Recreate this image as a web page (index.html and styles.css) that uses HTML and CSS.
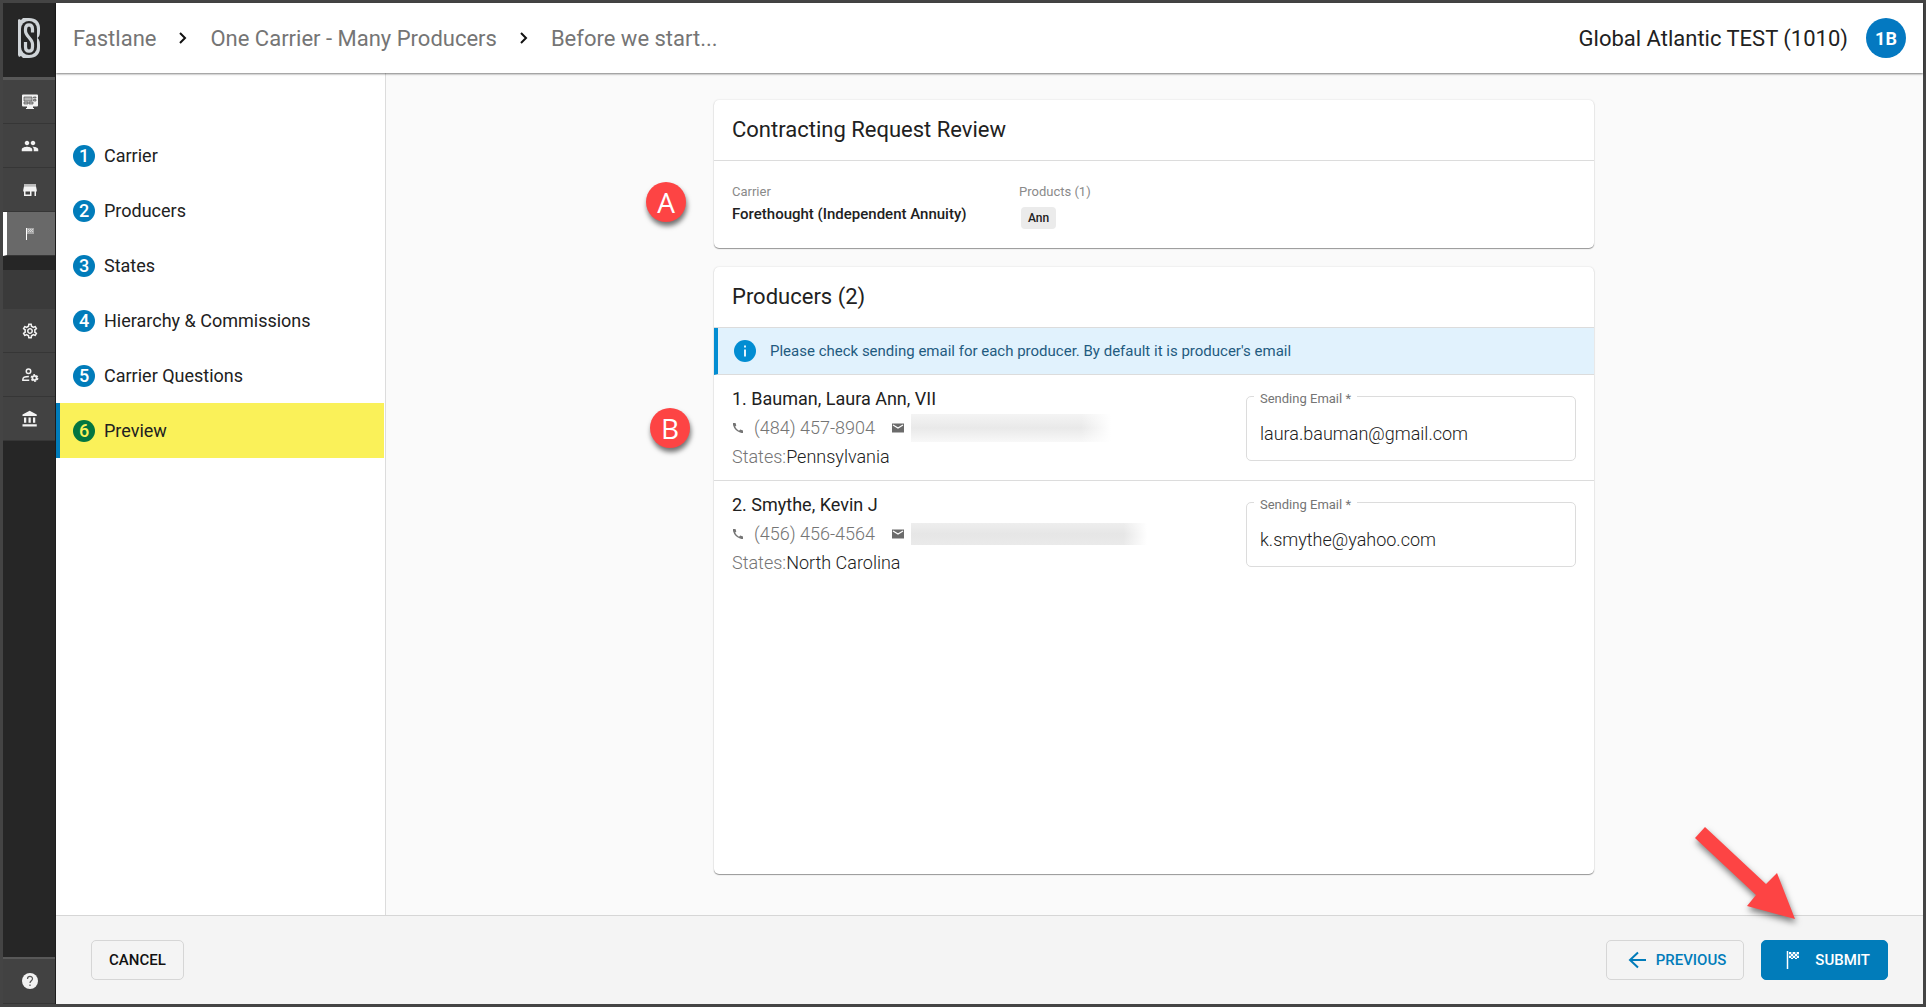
FILE: index.html
```html
<!DOCTYPE html>
<html lang="en">
<head>
<meta charset="utf-8">
<meta name="viewport" content="width=device-width, initial-scale=1">
<title>Contracting Request Review</title>
<link rel="stylesheet" href="styles.css">
</head>
<body>
<div class="app">
  <nav class="rail" aria-label="Main">
    <a class="rail-logo" href="#" aria-label="Home">
      <svg width="24" height="42" viewBox="0 0 24 42" fill="none">
        <path d="M1 3L2 2 4 3 6 1H12C19 1 23 5 23 11V14C23 18 22 20 20.500 21 22 22 23 24 23 28V31C23 37 19 41 12 41H6L4 39 2 40 1 38Z" fill="#cfd4d8"/>
        <rect x="4" y="4" width="16" height="34" rx="8" fill="#262626"/>
        <path d="M15.500 15.500V12C15.500 9 14.300 7.800 12 7.800S8.500 9 8.500 12V14C8.500 19 15.500 22 15.500 27V30C15.500 33 14.300 34.200 12 34.200S8.500 33 8.500 30V25" stroke="#cfd4d8" stroke-width="3.200"/>
      </svg>
    </a>
    <a class="rail-item" href="#" aria-label="Dashboard">
      <svg width="18" height="18" viewBox="0 0 18 18"><path d="M2 1.500h14q1 0 1 1v10q0 1-1 1h-4v1.500h1v1H5v-1h1v-1.500H2q-1 0-1-1v-10q0-1 1-1z" fill="#f2f2f2"/><path d="M3 4h8v4H3zM12.500 4H15v1h-2.500zM12.500 6.500H15v1.500h-2.500zM3 9h4v2H3zM8 9h4v2H8z" fill="#b5b5b5" stroke="#555" stroke-width=".7"/></svg>
    </a>
    <a class="rail-item" href="#" aria-label="Producers">
      <svg width="18" height="18" viewBox="0 0 24 24" fill="#f2f2f2"><path d="M16 11c1.660 0 2.990-1.340 2.990-3S17.660 5 16 5s-3 1.340-3 3 1.340 3 3 3zm-8 0c1.660 0 2.990-1.340 2.990-3S9.660 5 8 5 5 6.340 5 8s1.340 3 3 3zm0 2c-2.330 0-7 1.170-7 3.500V19h14v-2.500c0-2.330-4.670-3.500-7-3.500zm8 0c-.29 0-.62.020-.97.050 1.160.84 1.970 1.970 1.970 3.450V19h6v-2.500c0-2.330-4.670-3.500-7-3.500z"/></svg>
    </a>
    <a class="rail-item" href="#" aria-label="Carriers">
      <svg width="18" height="18" viewBox="0 0 24 24"><path d="M4 4h16v3H4z" fill="#bbb"/><path d="M21 14v-2l-1-5H4l-1 5v2h1v6h10v-6h4v6h2v-6h1zm-9 4H6v-4h6v4z" fill="#f2f2f2"/></svg>
    </a>
    <a class="rail-item rail-item--active" href="#" aria-label="Fastlane" aria-current="page">
      <svg width="18" height="18" viewBox="0 0 18 18"><path d="M5.500 3v12" stroke="#fff"/><path d="M6 3h7v6H6z" fill="#a5a5a5"/><path d="M7 4h1v1H7zM9 4h1v1H9zM11 4h1v1h-1zM8 5h1v1H8zM10 5h1v1h-1zM7 6h1v1H7zM9 6h1v1H9zM11 6h1v1h-1z" fill="#d5d5d5"/></svg>
    </a>
    <div class="rail-gap"></div>
    <div class="rail-blank"></div>
    <a class="rail-item" href="#" aria-label="Settings">
      <svg width="18" height="18" viewBox="0 0 24 24" fill="#f2f2f2"><path d="M19.430 12.980c.04-.32.070-.64.070-.98 0-.34-.03-.66-.07-.98l2.110-1.650c.19-.15.240-.42.120-.64l-2-3.460c-.09-.16-.26-.25-.44-.25-.06 0-.12.010-.17.030l-2.490 1c-.52-.4-1.080-.73-1.690-.98l-.38-2.650C14.460 2.180 14.250 2 14 2h-4c-.25 0-.46.180-.49.420l-.38 2.650c-.61.250-1.170.59-1.690.98l-2.490-1c-.06-.02-.12-.03-.18-.03-.17 0-.34.090-.43.250l-2 3.460c-.13.220-.07.490.12.640l2.110 1.650c-.04.320-.07.650-.07.980 0 .33.030.66.070.98l-2.110 1.650c-.19.150-.24.420-.12.640l2 3.460c.09.160.26.250.44.250.06 0 .12-.01.170-.03l2.490-1c.52.400 1.080.73 1.690.98l.38 2.650c.03.240.24.420.49.420h4c.25 0 .46-.18.490-.42l.38-2.650c.61-.25 1.170-.59 1.690-.98l2.490 1c.06.020.12.030.18.030.17 0 .34-.09.430-.25l2-3.460c.12-.22.070-.49-.12-.64l-2.110-1.650zm-1.980-1.710c.04.310.05.520.05.730 0 .21-.02.430-.05.730l-.14 1.130.89.700 1.080.84-.7 1.210-1.270-.51-1.040-.42-.9.680c-.43.320-.84.560-1.250.73l-1.060.43-.16 1.130-.2 1.350h-1.400l-.19-1.350-.16-1.130-1.060-.43c-.43-.18-.83-.41-1.230-.71l-.91-.7-1.060.43-1.270.51-.7-1.210 1.080-.84.890-.7-.14-1.130c-.03-.31-.05-.54-.05-.74s.02-.43.050-.73l.14-1.130-.89-.7-1.080-.84.700-1.210 1.270.51 1.040.42.900-.68c.43-.32.840-.56 1.250-.73l1.060-.43.160-1.130.2-1.350h1.390l.19 1.350.16 1.130 1.060.43c.43.180.83.410 1.230.71l.91.700 1.060-.43 1.270-.51.700 1.210-1.070.85-.89.700.14 1.130zM12 8c-2.210 0-4 1.790-4 4s1.790 4 4 4 4-1.790 4-4-1.790-4-4-4zm0 6c-1.100 0-2-.9-2-2s.9-2 2-2 2 .9 2 2-.9 2-2 2z"/></svg>
    </a>
    <a class="rail-item" href="#" aria-label="User management">
      <svg width="18" height="18" viewBox="0 0 24 24" fill="none" stroke="#f2f2f2"><circle cx="10" cy="7" r="3" stroke-width="2"/><path d="M11 19H2.500v-1.500C2.500 15 7 14 10.500 14" stroke-width="2"/><circle cx="18" cy="16" r="2.800" stroke-width="2.400"/><circle cx="18" cy="16" r="4.400" stroke-width="1.600" stroke-dasharray="2.600 2"/></svg>
    </a>
    <a class="rail-item" href="#" aria-label="Agency">
      <svg width="18" height="18" viewBox="0 0 24 24" fill="#f2f2f2"><path d="M4 10v7h3v-7H4zm6 0v7h3v-7h-3zM2 22h19v-3H2v3zm14-12v7h3v-7h-3zM11.500 1L2 6v2h19V6l-9.500-5z"/></svg>
    </a>
    <a class="rail-item rail-help" href="#" aria-label="Help">
      <svg width="18" height="18" viewBox="0 0 18 18"><circle cx="9" cy="9" r="8" fill="#f2f2f2"/><path d="M6.500 7c0-3.500 5-3.300 5-.3 0 2-2.500 2-2.500 4.300M9 12.500V14" fill="none" stroke="#555" stroke-width="1.200"/></svg>
    </a>
  </nav>

  <div class="page">
    <header class="topbar">
      <nav class="crumbs" aria-label="Breadcrumb">
        <a href="#">Fastlane</a>
        <svg class="crumb-sep" width="10" height="14" viewBox="0 0 10 14"><path d="M2 2l5 5-5 5" fill="none" stroke="#111" stroke-width="2"/></svg>
        <a href="#">One Carrier - Many Producers</a>
        <svg class="crumb-sep" width="10" height="14" viewBox="0 0 10 14"><path d="M2 2l5 5-5 5" fill="none" stroke="#111" stroke-width="2"/></svg>
        <a href="#">Before we start...</a>
      </nav>
      <div class="account">
        <span>Global Atlantic TEST (1010)</span>
        <button class="avatar" type="button">1B</button>
      </div>
    </header>

    <div class="body">
      <nav class="steps" aria-label="Steps">
        <a class="step" href="#"><span class="step-num">1</span>Carrier</a>
        <a class="step" href="#"><span class="step-num">2</span>Producers</a>
        <a class="step" href="#"><span class="step-num">3</span>States</a>
        <a class="step" href="#"><span class="step-num">4</span>Hierarchy &amp; Commissions</a>
        <a class="step" href="#"><span class="step-num">5</span>Carrier Questions</a>
        <a class="step step--current" href="#" aria-current="step"><span class="step-num">6</span>Preview</a>
      </nav>

      <main class="content">
        <section class="card">
          <h1 class="card-title">Contracting Request Review</h1>
          <div class="summary">
            <div class="summary-col">
              <span class="caption">Carrier</span>
              <span class="carrier-name">Forethought (Independent Annuity)</span>
            </div>
            <div class="summary-col">
              <span class="caption">Products (1)</span>
              <span class="chip">Ann</span>
            </div>
          </div>
          <span class="marker marker--a">A</span>
        </section>

        <section class="card card--fill">
          <h2 class="card-title">Producers (2)</h2>
          <p class="notice">
            <svg width="22" height="22" viewBox="0 0 22 22"><circle cx="11" cy="11" r="11" fill="#028dd2"/><path d="M11 5.500v2M11 9.500v7" stroke="#e1f2fd" stroke-width="2"/></svg>
            Please check sending email for each producer. By default it is producer's email
          </p>
          <article class="producer">
            <div class="producer-info">
              <h3 class="producer-name">1. Bauman, Laura Ann, VII</h3>
              <div class="contact">
                <svg width="12" height="12" viewBox="0 0 12 12"><path d="M1 1h2.500l.8 2.600-1.200 1.200Q4.500 7.300 7 8.800l1.300-1.200 2.700.8V11Q9.500 11 8 10.500 2.500 8.500 1 3z" fill="#757575"/></svg>
                <span class="phone">(484) 457-8904</span>
                <svg width="12" height="12" viewBox="0 0 12 12"><path d="M0 1.500h12v9H0z" fill="#6b6b6b"/><path d="M1 3l5 3 5-3" fill="none" stroke="#fff" stroke-width="1.200"/></svg>
                <span class="redacted redacted--short"></span>
              </div>
              <div class="states"><span class="muted">States:</span>Pennsylvania</div>
            </div>
            <div class="field">
              <label for="email-1">Sending Email *</label>
              <input id="email-1" type="email" value="laura.bauman@gmail.com">
            </div>
            <span class="marker marker--b">B</span>
          </article>
          <article class="producer">
            <div class="producer-info">
              <h3 class="producer-name">2. Smythe, Kevin J</h3>
              <div class="contact">
                <svg width="12" height="12" viewBox="0 0 12 12"><path d="M1 1h2.500l.8 2.600-1.200 1.200Q4.500 7.300 7 8.800l1.300-1.200 2.700.8V11Q9.500 11 8 10.500 2.500 8.500 1 3z" fill="#757575"/></svg>
                <span class="phone">(456) 456-4564</span>
                <svg width="12" height="12" viewBox="0 0 12 12"><path d="M0 1.500h12v9H0z" fill="#6b6b6b"/><path d="M1 3l5 3 5-3" fill="none" stroke="#fff" stroke-width="1.200"/></svg>
                <span class="redacted redacted--long"></span>
              </div>
              <div class="states"><span class="muted">States:</span>North Carolina</div>
            </div>
            <div class="field">
              <label for="email-2">Sending Email *</label>
              <input id="email-2" type="email" value="k.smythe@yahoo.com">
            </div>
          </article>
        </section>
      </main>
    </div>

    <footer class="actions">
      <button class="btn btn--cancel" type="button">CANCEL</button>
      <div class="actions-end">
        <button class="btn btn--previous" type="button">
          <svg width="18" height="18" viewBox="0 0 18 18"><path d="M10 1.500L2 9l8 7.500M2 9h16" fill="none" stroke="currentColor" stroke-width="2"/></svg>
          PREVIOUS
        </button>
        <button class="btn btn--submit" type="button">
          <svg width="14" height="20" viewBox="0 0 14 20"><path d="M1.500 1v18" stroke="#fff" stroke-width="1.500"/><path d="M3 2h2v2H3zM7 2h2v2H7zM11 2h2v2h-2zM5 4h2v2H5zM9 4h2v2H9zM3 6h2v2H3zM7 6h2v2H7zM11 6h2v2h-2zM5 8h2v1H5zM9 8h2v1H9z" fill="#fff"/><path d="M5 2h2v2H5zM9 2h2v2H9zM3 4h2v2H3zM7 4h2v2H7zM11 4h2v2h-2zM5 6h2v2H5zM9 6h2v2H9z" fill="#5aa9d6"/></svg>
          SUBMIT
        </button>
      </div>
      <svg class="pointer" width="120" height="110" viewBox="0 0 120 110"><path d="M16 7L77 64 88 53 106 99 58 86 67 75 6 18Z" fill="#fd4444"/></svg>
    </footer>
  </div>
</div>
</body>
</html>
```
FILE: styles.css
```css
* { box-sizing: border-box; }

body {
  margin: 0;
  font-family: Roboto, "Liberation Sans", sans-serif;
  font-size: 18px;
  color: #212121;
}

h1, h2, h3, p { margin: 0; }
a { color: inherit; text-decoration: none; }
svg { display: block; flex: none; }

.app {
  display: flex;
  min-height: 100vh;
  border: 3px solid #444;
  background: #fafafa;
}

/* Icon rail */
.rail {
  display: flex;
  flex-direction: column;
  width: 53px;
  flex: none;
  background: #262626;
  border-right: 1px solid #1d1d1d;
}
.rail-logo {
  display: flex;
  align-items: center;
  justify-content: center;
  height: 77px;
  padding-bottom: 5px;
  border-bottom: 3px solid #585858;
}
.rail-item {
  display: flex;
  align-items: center;
  justify-content: center;
  height: 44px;
  padding-left: 1px;
  background: #424242;
  border-bottom: 1px solid #363636;
}
.rail-item--active {
  background: #696969;
  border-left: 4px solid #fff;
  padding: 0 3px 0 0;
}
.rail-gap { height: 14px; }
.rail-blank { height: 39px; background: #3a3a3a; }
.rail-help {
  height: 47px;
  margin-top: auto;
  border-top: 2px solid #585858;
}

.page {
  flex: 1;
  display: flex;
  flex-direction: column;
  min-width: 0;
}

/* Top bar */
.topbar {
  position: relative;
  display: flex;
  align-items: center;
  justify-content: space-between;
  height: 70px;
  padding: 0 17px;
  background: #fff;
  box-shadow: 0 1px 2px rgba(0, 0, 0, .5);
  font-size: 22px;
}
.crumbs { display: flex; align-items: center; color: #757575; }
.crumb-sep { margin: 0 22px; }
.account { display: flex; align-items: center; gap: 18px; }
.avatar {
  width: 40px;
  height: 40px;
  padding: 0;
  border: 0;
  border-radius: 50%;
  background: #0479c1;
  color: #fff;
  font: 700 18px Roboto, sans-serif;
}

.body { flex: 1; display: flex; }

/* Steps */
.steps {
  width: 330px;
  flex: none;
  padding-top: 55px;
  background: #fff;
  border-right: 1px solid #dcdcdc;
}
.step {
  display: flex;
  align-items: center;
  gap: 9px;
  height: 55px;
  margin-right: 1px;
  padding-left: 17px;
}
.step-num {
  width: 22px;
  height: 22px;
  border-radius: 50%;
  background: #017cba;
  color: #fff;
  font-weight: 500;
  line-height: 22px;
  text-align: center;
}
.step--current {
  padding-left: 13px;
  background: #faf159;
  border-left: 4px solid #017cba;
}
.step--current .step-num { background: #037540; color: #faf159; }

/* Review cards */
.content {
  flex: 1;
  display: flex;
  flex-direction: column;
  align-items: center;
  gap: 19px;
  padding: 27px 25px 41px 24px;
}
.card {
  position: relative;
  width: 100%;
  max-width: 880px;
  background: #fff;
  border-radius: 5px;
  box-shadow: 0 1px 1px rgba(0, 0, 0, .38), 0 0 2px rgba(0, 0, 0, .14);
}
.card--fill { flex: 1; }
.card-title {
  height: 61px;
  padding-left: 18px;
  border-bottom: 1px solid #dcdcdc;
  font-size: 22px;
  font-weight: 400;
  line-height: 60px;
}
.summary { display: flex; height: 87px; padding: 22px 18px; }
.summary-col {
  display: flex;
  flex-direction: column;
  align-items: flex-start;
  width: 287px;
}
.caption { color: #8a8a8a; font-size: 13px; line-height: 18px; }
.carrier-name { font-size: 15px; font-weight: 500; line-height: 26px; }
.chip {
  margin: 6px 2px;
  padding: 0 7px;
  border-radius: 4px;
  background: #ebebeb;
  font-size: 12px;
  font-weight: 500;
  line-height: 22px;
}

.notice {
  display: flex;
  align-items: center;
  gap: 14px;
  height: 47px;
  padding-left: 16px;
  background: #e1f2fd;
  border-left: 4px solid #028dd2;
  border-bottom: 1px solid #dcdcdc;
  color: #1f5b80;
  font-size: 15px;
}

.producer {
  position: relative;
  display: flex;
  justify-content: space-between;
  padding: 10px 18px 9px;
}
.producer + .producer { border-top: 1px solid #dcdcdc; }
.producer-name { font-size: 18px; font-weight: 400; line-height: 28px; }
.contact {
  display: flex;
  align-items: center;
  height: 29px;
  color: #757575;
}
.phone { margin: 0 17px 0 10px; font-weight: 300; }
.states { font-weight: 300; line-height: 29px; }
.muted { color: #757575; }
.redacted { margin-left: 7px; }
.redacted--short {
  width: 200px;
  height: 28px;
  background:
    linear-gradient(90deg, transparent 85%, #fff),
    linear-gradient(#f4f4f4, #e9e9e9 50%, #f8f8f8);
}
.redacted--long {
  width: 236px;
  height: 22px;
  background:
    linear-gradient(90deg, transparent 90%, #fff),
    linear-gradient(#eee, #e6e6e6 50%, #eaeaea);
}

.field {
  position: relative;
  width: 330px;
  height: 65px;
  margin-top: 11px;
}
.field label {
  position: absolute;
  top: -6px;
  left: 8px;
  padding: 0 6px;
  background: #fff;
  color: #757575;
  font-size: 13px;
  line-height: 18px;
}
.field input {
  width: 100%;
  height: 100%;
  padding: 10px 13px 0;
  border: 1px solid #dcdcdc;
  border-radius: 5px;
  background: #fff;
  color: #212121;
  font: 300 18px Roboto, sans-serif;
}

/* Footer */
.actions {
  position: relative;
  display: flex;
  align-items: center;
  justify-content: space-between;
  height: 89px;
  padding: 0 35px;
  background: #f4f4f4;
  border-top: 1px solid #d6d6d6;
}
.actions-end { display: flex; gap: 17px; }
.btn {
  display: flex;
  align-items: center;
  justify-content: center;
  height: 40px;
  padding: 0 17px;
  border: 1px solid #d6d6d6;
  border-radius: 5px;
  background: #f4f4f4;
  color: #111;
  font: 500 15px Roboto, sans-serif;
}
.btn--previous { gap: 10px; padding: 0 17px 0 21px; color: #017cba; }
.btn--submit {
  gap: 15px;
  padding: 0 17px 0 24px;
  background: #017cba;
  border-color: #017cba;
  color: #fff;
}

/* Callouts drawn over the page */
.marker {
  position: absolute;
  width: 40px;
  height: 40px;
  border-radius: 50%;
  background: #fd4444;
  box-shadow: 1px 4px 5px rgba(0, 0, 0, .55);
  color: #fff;
  font: 28px/40px "Open Sans", sans-serif;
  text-align: center;
}
.marker--a { top: 82px; left: -68px; }
.marker--b { top: 33px; left: -64px; }
.pointer {
  position: absolute;
  top: -96px;
  right: 114px;
  filter: drop-shadow(1px 4px 3px rgba(0, 0, 0, .5));
}
```
